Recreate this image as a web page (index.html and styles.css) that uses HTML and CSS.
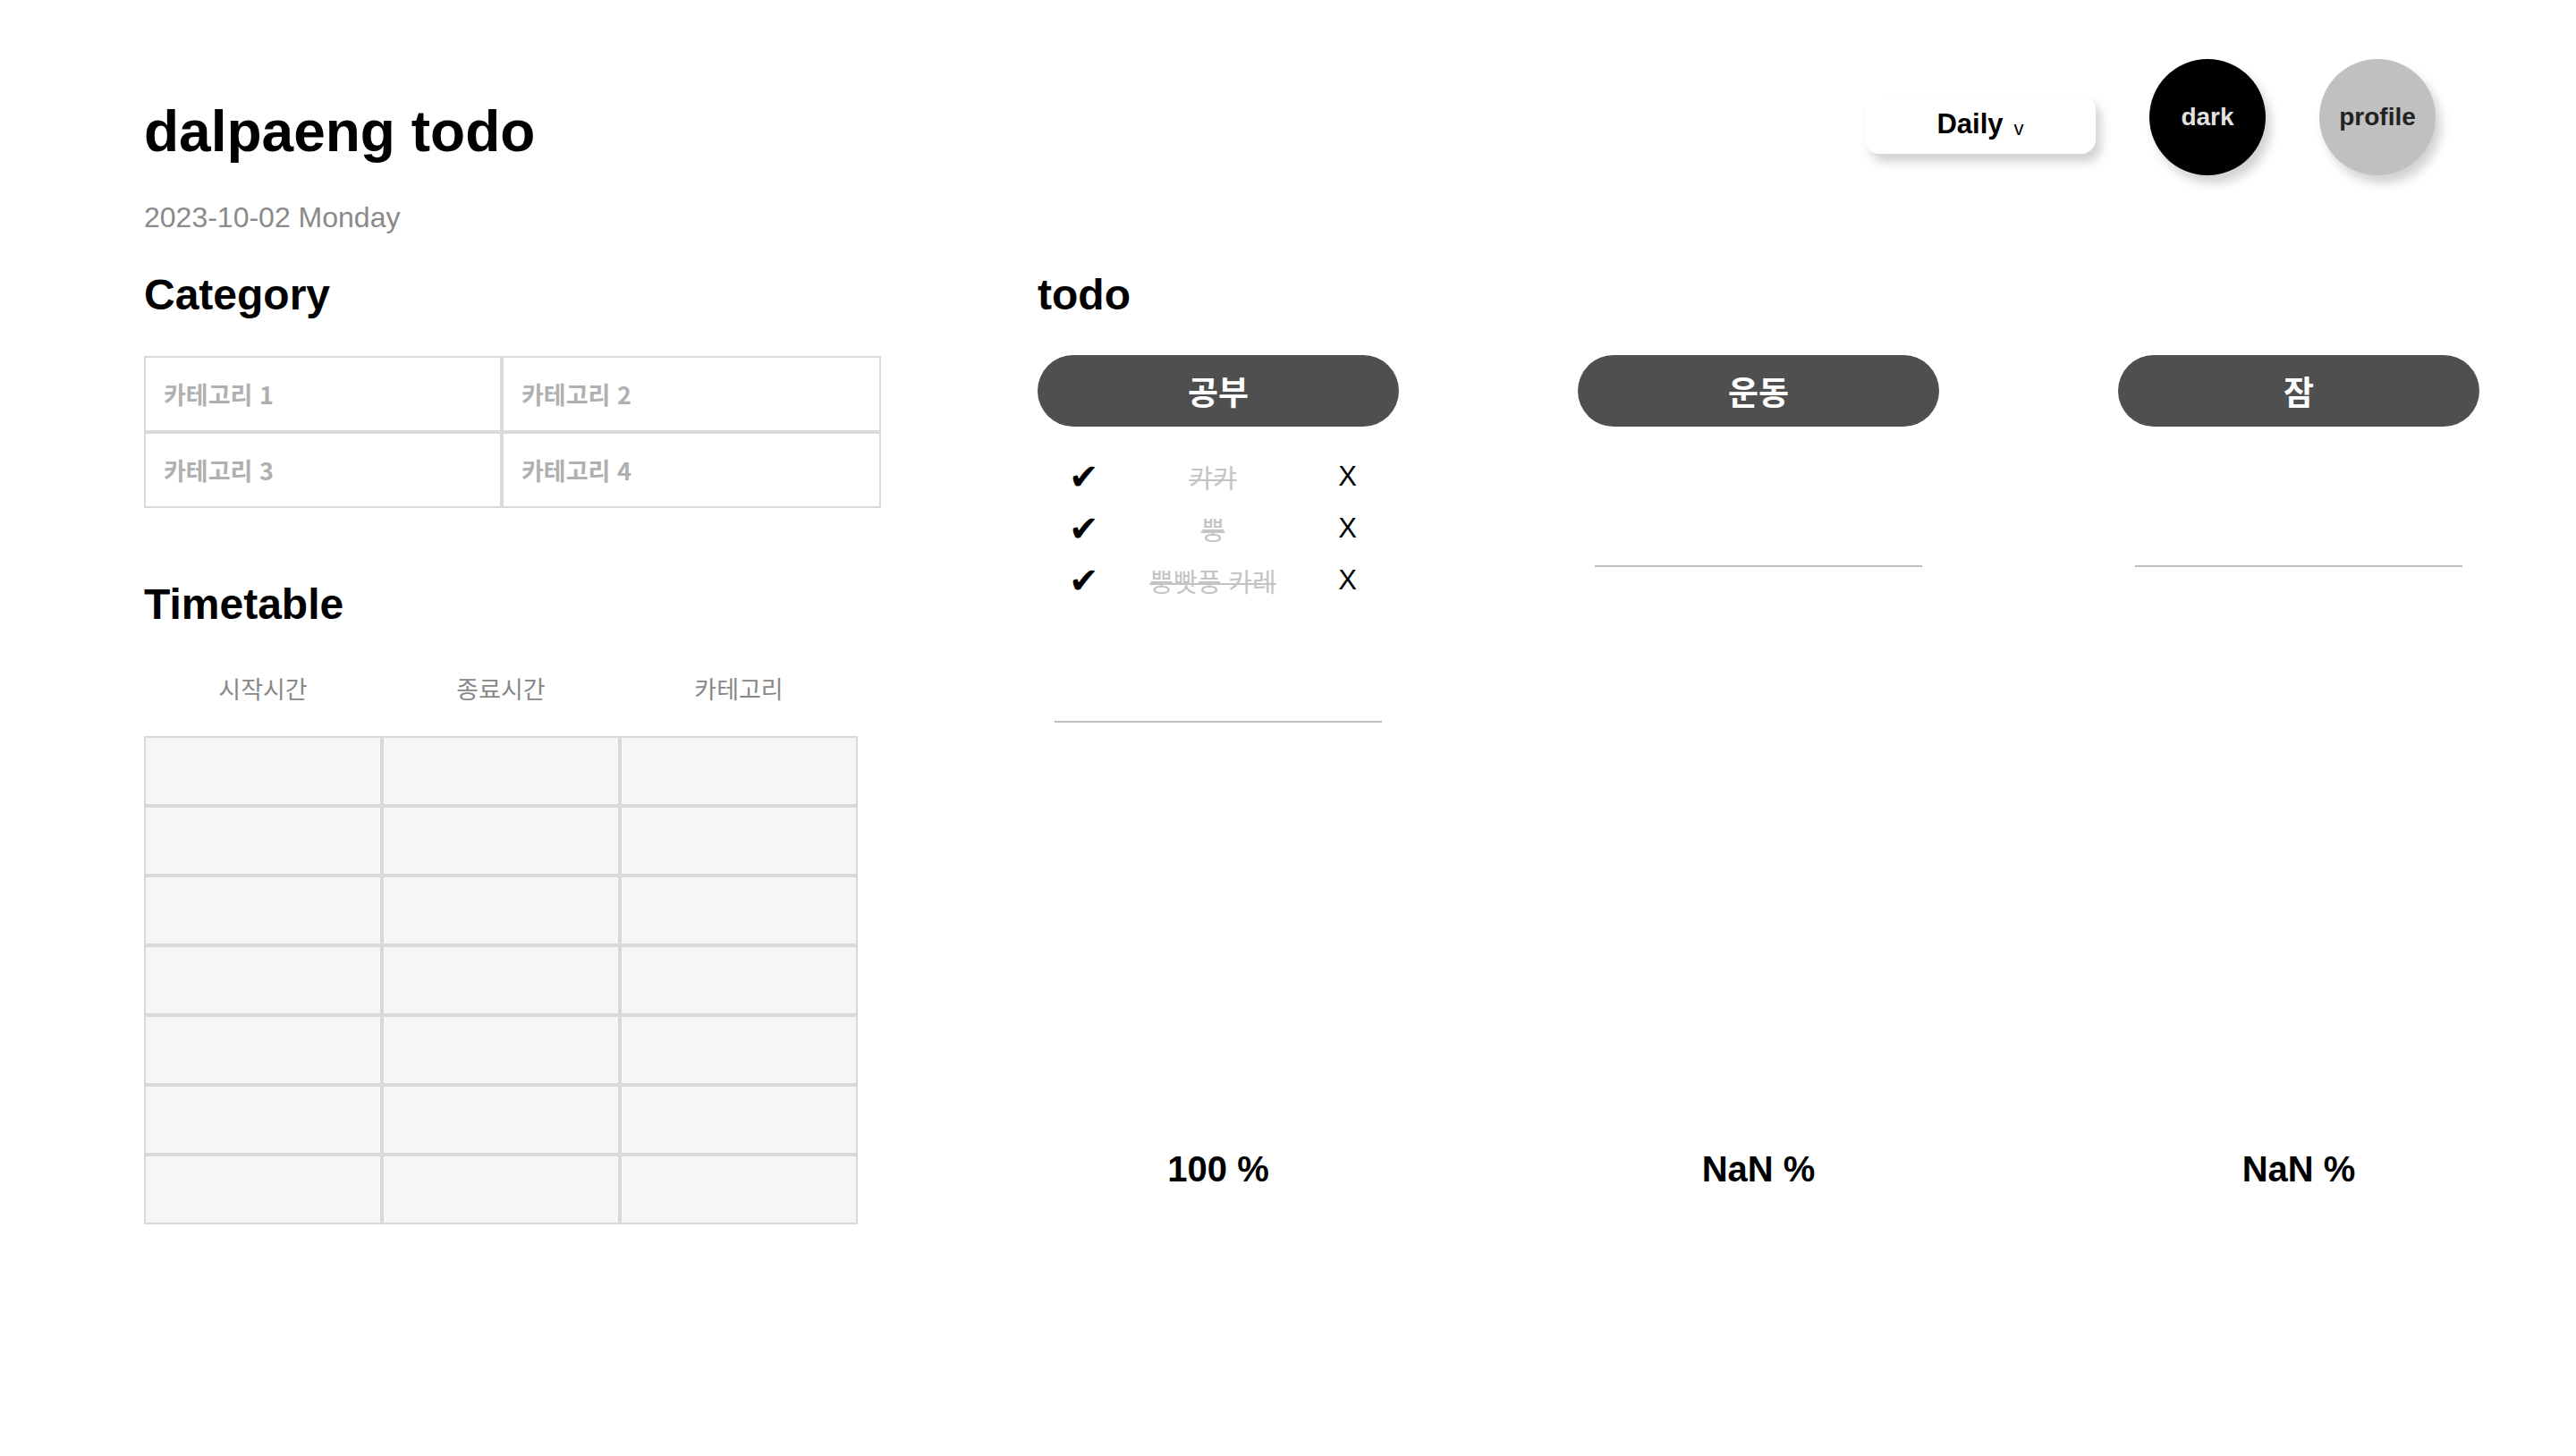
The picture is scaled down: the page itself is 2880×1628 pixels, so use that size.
FILE: index.html
```html
<!DOCTYPE html>
<html lang="ko">
<head>
<meta charset="utf-8">
<title>dalpaeng todo</title>
<link rel="stylesheet" href="styles.css">
</head>
<body>
<div class="page">
  <header class="top">
    <div class="brand">
      <h1 class="title">dalpaeng todo</h1>
      <p class="date">2023-10-02 Monday</p>
    </div>
    <div class="controls">
      <button class="mode-select">Daily<span class="chev">v</span></button>
      <button class="circle circle-dark">dark</button>
      <button class="circle circle-profile">profile</button>
    </div>
  </header>

  <main class="content">
    <section class="left">
      <h2 class="section-title">Category</h2>
      <div class="cat-grid">
        <div class="cat-cell">카테고리 1</div>
        <div class="cat-cell">카테고리 2</div>
        <div class="cat-cell">카테고리 3</div>
        <div class="cat-cell">카테고리 4</div>
      </div>

      <h2 class="section-title timetable-title">Timetable</h2>
      <div class="tt-head">
        <div>시작시간</div>
        <div>종료시간</div>
        <div>카테고리</div>
      </div>
      <div class="tt-grid">
        <div class="tt-cell"></div><div class="tt-cell"></div><div class="tt-cell"></div>
        <div class="tt-cell"></div><div class="tt-cell"></div><div class="tt-cell"></div>
        <div class="tt-cell"></div><div class="tt-cell"></div><div class="tt-cell"></div>
        <div class="tt-cell"></div><div class="tt-cell"></div><div class="tt-cell"></div>
        <div class="tt-cell"></div><div class="tt-cell"></div><div class="tt-cell"></div>
        <div class="tt-cell"></div><div class="tt-cell"></div><div class="tt-cell"></div>
        <div class="tt-cell"></div><div class="tt-cell"></div><div class="tt-cell"></div>
      </div>
    </section>

    <section class="right">
      <h2 class="section-title">todo</h2>
      <div class="todo-cols">
        <div class="todo-col">
          <div class="pill">공부</div>
          <ul class="todo-list">
            <li class="todo-item"><span class="check">✔</span><span class="todo-text">캬캬</span><span class="del">X</span></li>
            <li class="todo-item"><span class="check">✔</span><span class="todo-text">뿡</span><span class="del">X</span></li>
            <li class="todo-item"><span class="check">✔</span><span class="todo-text">뿡빳풍 카레</span><span class="del">X</span></li>
          </ul>
          <input class="todo-input" type="text" aria-label="add todo">
          <div class="percent">100 %</div>
        </div>
        <div class="todo-col">
          <div class="pill">운동</div>
          <ul class="todo-list"></ul>
          <input class="todo-input" type="text" aria-label="add todo">
          <div class="percent">NaN %</div>
        </div>
        <div class="todo-col">
          <div class="pill">잠</div>
          <ul class="todo-list"></ul>
          <input class="todo-input" type="text" aria-label="add todo">
          <div class="percent">NaN %</div>
        </div>
      </div>
    </section>
  </main>
</div>
</body>
</html>
```

FILE: styles.css
```css
* {
  box-sizing: border-box;
}

html, body {
  margin: 0;
  padding: 0;
  background: #ffffff;
}

body {
  font-family: "Liberation Sans", Arial, "Noto Sans CJK KR", sans-serif;
  color: #000;
}

.page {
  padding: 66px 157px 0 161px;
}

/* header */
.top {
  display: flex;
  justify-content: space-between;
  align-items: flex-start;
}

.brand {
  padding-top: 45px;
}

.title {
  margin: 0;
  font-size: 64px;
  line-height: 72px;
  font-weight: 700;
}

.date {
  margin: 40px 0 0;
  font-size: 32px;
  line-height: 40px;
  color: #8a8a8a;
}

.controls {
  display: flex;
  align-items: flex-start;
  gap: 60px;
}

.mode-select {
  margin-top: 40px;
  width: 258px;
  height: 66px;
  border: 0;
  border-radius: 16px;
  background: #fff;
  box-shadow: 6px 9px 12px rgba(0, 0, 0, 0.18);
  font-family: "Liberation Sans", Arial, sans-serif;
  font-size: 31px;
  font-weight: 700;
  color: #000;
  display: flex;
  align-items: center;
  justify-content: center;
  padding: 0;
}

.chev {
  font-size: 22px;
  font-weight: 400;
  margin-left: 12px;
  position: relative;
  top: 5px;
}

.circle {
  width: 130px;
  height: 130px;
  border: 0;
  border-radius: 50%;
  padding: 0;
  font-family: "Liberation Sans", Arial, sans-serif;
  font-size: 28px;
  font-weight: 700;
  box-shadow: 6px 9px 12px rgba(0, 0, 0, 0.18);
}

.circle-dark {
  background: #000;
  color: #e2e2e2;
}

.circle-profile {
  background: #c0c0c0;
  color: #222;
}

/* main content */
.content {
  margin-top: 39px;
  display: grid;
  grid-template-columns: 999px 1fr;
}

.section-title {
  margin: 0;
  font-size: 48px;
  line-height: 56px;
  font-weight: 700;
}

.cat-grid {
  margin-top: 40px;
  display: grid;
  grid-template-columns: 400px 424px;
  grid-auto-rows: 85px;
}

.cat-cell {
  border: 2px solid #d9d9d9;
  padding-left: 20px;
  display: flex;
  align-items: center;
  font-family: "Noto Sans CJK KR", "Liberation Sans", sans-serif;
  font-size: 27px;
  line-height: 36px;
  font-weight: 700;
  color: #b0b0b0;
}

.timetable-title {
  margin-top: 80px;
}

.tt-head {
  margin-top: 48px;
  display: grid;
  grid-template-columns: repeat(3, 266px);
  height: 40px;
  font-size: 27px;
  line-height: 40px;
  color: #888;
  text-align: center;
}

.tt-grid {
  margin-top: 31px;
  display: grid;
  grid-template-columns: repeat(3, 266px);
  grid-auto-rows: 78px;
}

.tt-cell {
  background: #f7f5f6;
  border: 2px solid #d9d9d9;
}

/* todo */
.todo-cols {
  margin-top: 39px;
  display: flex;
  gap: 200px;
}

.todo-col {
  width: 404px;
  height: 934px;
  display: flex;
  flex-direction: column;
}

.pill {
  height: 80px;
  border-radius: 40px;
  background: #4f4f4f;
  color: #fff;
  font-size: 37px;
  font-weight: 700;
  display: flex;
  align-items: center;
  justify-content: center;
}

.todo-list {
  list-style: none;
  margin: 27px 0 0;
  padding: 0;
}

.todo-item {
  height: 58px;
  display: grid;
  grid-template-columns: 1fr auto 1fr;
  align-items: center;
  padding: 0 47px 0 35px;
}

.check {
  justify-self: start;
  font-family: "DejaVu Sans", sans-serif;
  font-size: 40px;
  line-height: 44px;
  color: #000;
}

.todo-text {
  font-size: 29px;
  color: #c4c4c4;
  text-decoration: line-through;
}

.del {
  justify-self: end;
  font-size: 31px;
  color: #000;
}

.todo-input {
  display: block;
  width: 366px;
  height: 130px;
  margin: 0 auto;
  border: 0;
  border-bottom: 2px solid #bdbdbd;
  background: transparent;
  outline: none;
  font-size: 28px;
  padding: 0;
}

.percent {
  margin-top: auto;
  text-align: center;
  font-size: 40px;
  line-height: 48px;
  font-weight: 700;
}
```
